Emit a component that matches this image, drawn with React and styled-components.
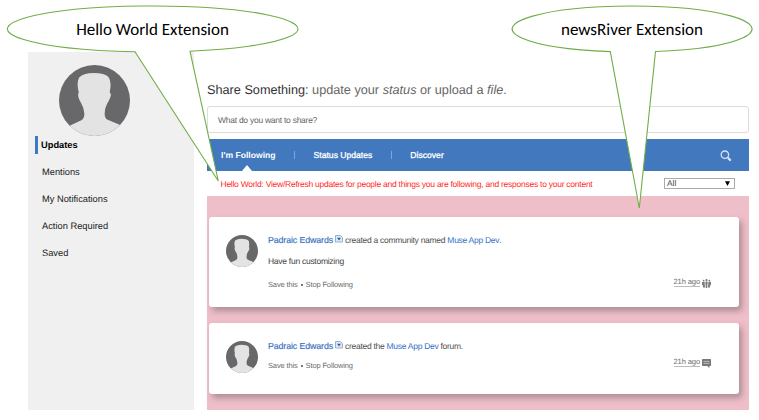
import React from "react";
import styled, { createGlobalStyle, css } from "styled-components";

const Global = createGlobalStyle`
  *, *::before, *::after { box-sizing: border-box; }
  body { margin: 0; background: #fff; font-family: "Liberation Sans", Arial, sans-serif; text-rendering: geometricPrecision; }
`;

const Page = styled.div`
  position: relative;
  width: 759px;
  height: 420px;
  overflow: hidden;
  display: flex;
  align-items: flex-start;
  padding: 52px 0 0 28px;
`;

const Sidebar = styled.aside`
  width: 166px;
  height: 358px;
  background: #f0f0f0;
  padding: 13px 0 0 7px;
`;

const Portrait = styled.svg`
  display: block;
  flex: none;
  width: ${(p) => p.$size}px;
  height: ${(p) => p.$size}px;
`;

const ProfileSlot = styled.div`
  padding-left: 24px;
  height: 71px;
`;

const NavList = styled.nav`
  display: flex;
  flex-direction: column;
`;

const NavItem = styled.a`
  height: 18px;
  line-height: 19px;
  margin-bottom: 9px;
  padding-left: 4px;
  border-left: 3px solid transparent;
  font-size: 9.3px;
  color: #222;
  ${(p) =>
    p.$active &&
    css`
      padding-left: 3px;
      border-left-color: #4178be;
      font-weight: bold;
      color: #000;
    `}
`;

const Main = styled.main`
  width: 542px;
  margin-left: 13px;
  padding-top: 27px;
`;

const ShareTitle = styled.h1`
  margin: 0;
  height: 27px;
  line-height: 22px;
  font-size: 12.7px;
  font-weight: normal;
  color: #666;
  white-space: pre;
  strong { font-weight: normal; color: #333; }
`;

const ShareBox = styled.div`
  height: 27px;
  line-height: 26px;
  padding-left: 10px;
  border: 1px solid #dcdcdc;
  border-radius: 3px;
  font-size: 8.5px;
  letter-spacing: -0.26px;
  color: #666;
`;

const TabBar = styled.div`
  height: 32px;
  margin-top: 6px;
  padding: 0 17px 0 14px;
  display: flex;
  align-items: center;
  background: #4178be;
  color: #fff;
`;

const Tab = styled.a`
  position: relative;
  height: 32px;
  line-height: 33px;
  font-size: 8.6px;
  white-space: nowrap;
  ${(p) =>
    p.$active
      ? css`
          font-weight: bold;
          &::after {
            content: "";
            position: absolute;
            left: 21px;
            bottom: 0;
            border: 5px solid transparent;
            border-top: 0;
            border-bottom: 6px solid #fff;
          }
        `
      : css`
          -webkit-text-stroke: 0.3px #fff;
        `}
`;

const Divider = styled.span`
  width: 1px;
  height: 8px;
  margin: 0 18.5px;
  background: #7ea6dc;
`;

const SearchIcon = styled.svg`
  width: 12px;
  height: 12px;
  margin: 2px 0 0 auto;
`;

const FilterRow = styled.div`
  height: 25px;
  padding: 0 14px 0 13.5px;
  display: flex;
  align-items: center;
  justify-content: space-between;
  font-size: 8.5px;
  letter-spacing: -0.255px;
  color: #ff2a2a;
`;

const Select = styled.div`
  width: 71px;
  height: 11px;
  padding: 0 4px 0 2px;
  border: 1px solid #aaa;
  display: flex;
  align-items: center;
  justify-content: space-between;
  font-size: 8.4px;
  letter-spacing: 0;
  line-height: 9px;
  color: #444;
  svg { width: 5px; height: 5px; }
`;

const River = styled.section`
  height: 214px;
  padding: 21px 10px 0 2px;
  display: flex;
  flex-direction: column;
  gap: 16px;
  background: #efbfc9;
`;

const Card = styled.article`
  display: flex;
  height: ${(p) => p.$height}px;
  padding: 18px 28px 0 17px;
  border-radius: 3px;
  background: #fff;
  box-shadow: 3px 4px 6px rgba(80, 75, 75, 0.42);
`;

const CardBody = styled.div`
  flex: 1;
  margin-left: 10px;
`;

const Headline = styled.div`
  display: flex;
  align-items: center;
  height: 10px;
  font-size: 8.5px;
  letter-spacing: -0.28px;
  color: #505050;
  white-space: pre;
`;

const Link = styled.a`
  color: #3470c4;
  ${(p) =>
    p.$person &&
    css`
      font-size: 8.8px;
      letter-spacing: -0.1px;
      -webkit-text-stroke: 0.15px #3470c4;
    `}
`;

const BadgeIcon = styled.svg`
  width: 8px;
  height: 8px;
  margin: -3px 2px 0;
`;

const Message = styled.p`
  margin: 11px 0 0;
  height: 11px;
  line-height: 10px;
  font-size: 8.5px;
  letter-spacing: -0.27px;
  color: #444;
`;

const Actions = styled.div`
  display: flex;
  align-items: center;
  gap: 3px;
  height: 10px;
  margin-top: ${(p) => p.$gap}px;
  font-size: 7.5px;
  letter-spacing: -0.14px;
  color: #6c6c6c;
`;

const Dot = styled.i`
  width: 2px;
  height: 2px;
  margin-top: 1px;
  background: #777;
`;

const Stamp = styled.div`
  display: flex;
  align-items: center;
  height: 11px;
  gap: 2px;
  margin-top: ${(p) => p.$top}px;
  font-size: 7.6px;
  letter-spacing: -0.14px;
  color: #6c6c6c;
  span { line-height: 8px; border-bottom: 1px solid #bbb; }
  svg { width: 9px; height: 9px; margin-top: 1px; }
`;

const CalloutLayer = styled.svg`
  position: absolute;
  inset: 0;
  width: 759px;
  height: 420px;
  pointer-events: none;
`;

const CalloutLabel = styled.div`
  position: absolute;
  top: 18px;
  left: ${(p) => p.$left}px;
  width: ${(p) => p.$width}px;
  line-height: 23px;
  text-align: center;
  white-space: nowrap;
  font-family: Carlito, Lato, sans-serif;
  font-size: 17px;
  color: #000;
`;

function Avatar({ size }) {
  const id = React.useId();
  return (
    <Portrait $size={size} viewBox="0 0 70 70">
      <clipPath id={id}>
        <circle cx="35" cy="35" r="35" />
      </clipPath>
      <g clipPath={`url(#${id})`}>
        <rect width="70" height="70" fill="#68686a" />
        <path
          fill="#e3e3e3"
          d="M0 64.5 L10.5 60 L22 54.5 Q25 52.5 25 48 Q24.5 42 22 38 Q20 35 19 31 Q18.5 28 19.5 27 Q17 17 20 12 Q25 8 34 8 Q45 8 49 12 Q52 17 50 27 Q52 28 50.5 32 Q49 36 47.5 38 Q45 43 45 48 Q45 52.5 48 54 L61 59.5 L70 64 V70 H0 Z"
        />
      </g>
    </Portrait>
  );
}

function Badge() {
  return (
    <BadgeIcon viewBox="0 0 8 8">
      <path d="M.5 .5h5l2 2v4.5h-7z" fill="#dfeaf6" stroke="#8aa9cc" strokeWidth=".9" />
      <path d="M2 2.8h4L4 5.4z" fill="#315f9a" />
    </BadgeIcon>
  );
}

function PeopleIcon() {
  return (
    <svg viewBox="0 0 9 9" fill="#7c7c7c">
      <circle cx="4.5" cy="1.1" r="1.1" />
      <circle cx="1.6" cy="1.7" r=".9" />
      <circle cx="7.4" cy="1.7" r=".9" />
      <path d="M3.4 2.6h2.2v3.2h-.3V9H3.7V5.8h-.3zM0 3h2.7v3.2h.3v2.3H1V6.2H0zM6.3 3H9v3.2H8v2.3H6V6.2h.3z" />
    </svg>
  );
}

function ForumIcon() {
  return (
    <svg viewBox="0 0 9 9">
      <path d="M.7 0h7.6q.7 0 .7.7v5.5q0 .7-.7.7H7.4V9L5.2 6.9H.7Q0 6.9 0 6.2V.7Q0 0 .7 0z" fill="#777" />
      <path d="M1.5 2.4h6M1.5 4.4h6" stroke="#d8d8d8" strokeWidth=".7" />
    </svg>
  );
}

const sections = ["Updates", "Mentions", "My Notifications", "Action Required", "Saved"];

export default function App() {
  return (
    <Page>
      <Global />
      <Sidebar>
        <ProfileSlot>
          <Avatar size={71} />
        </ProfileSlot>
        <NavList>
          {sections.map((name, i) => (
            <NavItem key={name} $active={i === 0}>{name}</NavItem>
          ))}
        </NavList>
      </Sidebar>

      <Main>
        <ShareTitle>
          <strong>Share Something:</strong> update your <em>status</em> or upload a <em>file</em>.
        </ShareTitle>
        <ShareBox>What do you want to share?</ShareBox>
        <TabBar>
          <Tab $active>I'm Following</Tab>
          <Divider />
          <Tab>Status Updates</Tab>
          <Divider />
          <Tab>Discover</Tab>
          <SearchIcon viewBox="0 0 12 12" fill="none" stroke="#d5e2f4">
            <circle cx="4.9" cy="4.7" r="3.7" strokeWidth="1.3" />
            <path d="M7.6 7.5l1 1" strokeWidth="1.2" />
            <path d="M8.8 8.7l1.3 1.3" strokeWidth="2.4" strokeLinecap="round" />
          </SearchIcon>
        </TabBar>
        <FilterRow>
          Hello World: View/Refresh updates for people and things you are following, and responses to your content
          <Select>
            All
            <svg viewBox="0 0 5 5"><path d="M0 .3h5L2.5 5z" fill="#000" /></svg>
          </Select>
        </FilterRow>
        <River>
          <Card $height={90}>
            <Avatar size={32} />
            <CardBody>
              <Headline>
                <Link $person>Padraic Edwards</Link>
                <Badge />
                created a community named <Link>Muse App Dev</Link>.
              </Headline>
              <Message>Have fun customizing</Message>
              <Actions $gap={12}>Save this<Dot />Stop Following</Actions>
            </CardBody>
            <Stamp $top={42}><span>21h ago</span><PeopleIcon /></Stamp>
          </Card>
          <Card $height={71}>
            <Avatar size={32} />
            <CardBody>
              <Headline>
                <Link $person>Padraic Edwards</Link>
                <Badge />
                created the <Link>Muse App Dev</Link> forum.
              </Headline>
              <Actions $gap={9}>Save this<Dot />Stop Following</Actions>
            </CardBody>
            <Stamp $top={16}><span>21h ago</span><ForumIcon /></Stamp>
          </Card>
        </River>
      </Main>

      <CalloutLayer viewBox="0 0 759 420" fill="#fff" stroke="#70ad47" strokeWidth="1.1">
        <path d="M135 51.8A145.3 23 0 1 1 190 51.2L218.3 181Z" />
        <path d="M610.3 51.62A120 23 0 1 1 655.5 51.56L639.3 208Z" />
      </CalloutLayer>
      <CalloutLabel $left={52} $width={201}>Hello World Extension</CalloutLabel>
      <CalloutLabel $left={532} $width={200}>newsRiver Extension</CalloutLabel>
    </Page>
  );
}
